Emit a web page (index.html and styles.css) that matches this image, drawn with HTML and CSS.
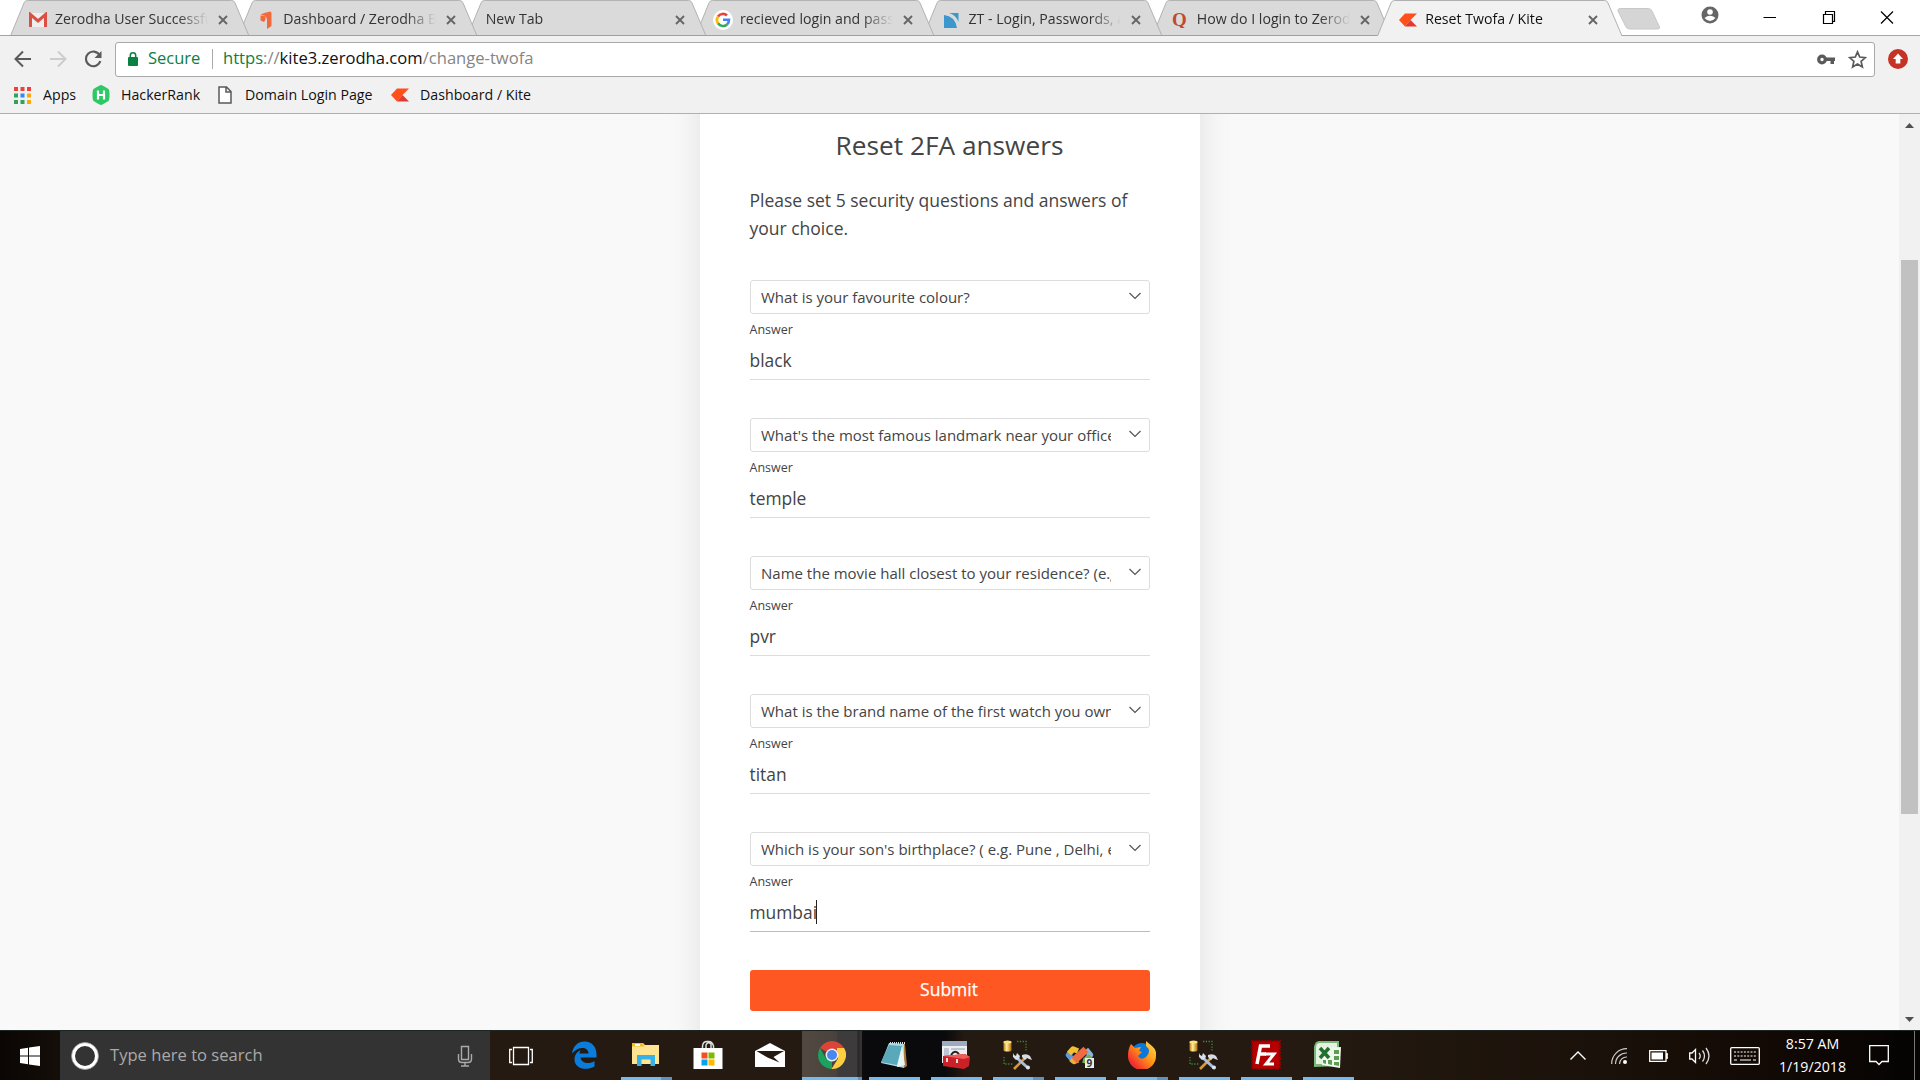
FILE: index.html
```
<!DOCTYPE html>
<html lang="en">
<head>
<meta charset="utf-8">
<title>Reset Twofa / Kite</title>
<link rel="stylesheet" href="styles.css">
</head>
<body>
<svg class="defs" width="0" height="0" aria-hidden="true">
  <defs>
    <symbol id="tab-shape" viewBox="0 0 246 36"><path d="M.5 36 14 3Q15 .5 17.500 .5H227.500Q230 .5 231 3L245 36"/></symbol>
    <symbol id="cross" viewBox="0 0 10 10"><path d="M1 1 9 9M9 1 1 9" stroke="#666" stroke-width="1.900" fill="none"/></symbol>
    <symbol id="kite" viewBox="0 0 18 14"><path d="M6 .5H18L11.500 7 6 13.500 0 7Z" fill="#ff4f1a"/><path d="M11.500 7 18 13.500H6Z" fill="#e03a33"/></symbol>
    <symbol id="chevron" viewBox="0 0 12 8"><path d="M.5 1 6 6.500 11.500 1" stroke="#555" stroke-width="1.200" fill="none"/></symbol>
    <linearGradient id="gold" x1="0" x2="1" y1="0" y2="0"><stop offset="0" stop-color="#b57a10"/><stop offset=".4" stop-color="#fff0a0"/><stop offset="1" stop-color="#b06c00"/></linearGradient>
    <symbol id="dbtools" viewBox="0 0 32 32">
      <path d="M1.500 3v8a4 1.500 0 0 0 8 0V3Z" fill="url(#gold)"/><ellipse cx="5.500" cy="3" rx="4" ry="1.500" fill="#ffdf78"/>
      <path d="M15 2.500H24V12M2 18v7h9" fill="none" stroke="#3c8c35" stroke-width="1.300" stroke-dasharray="1.300 1.500"/>
      <path d="M12 30 24 18" stroke="#d99a35" stroke-width="2.600"/><path d="M20 16q5-2 8 1l2 4-3-1-2-1-2 2-3-3Z" fill="#d5dbe5"/>
      <path d="M14 18 26 29" stroke="#aabddc" stroke-width="3"/><path d="M11 14v4l3 3 3-1 1-3-3-3-1 3-2-1Z" fill="#d5dff0"/><circle cx="26" cy="28.500" r="2" fill="#dce5f3"/>
    </symbol>
  </defs>
</svg>

<header class="browser">
  <div class="tabstrip">
    <div class="tabs">
      <div class="tab"><svg class="tab-bg"><use href="#tab-shape"/></svg>
        <svg class="fav" viewBox="0 0 18 14"><path d="M0 0H18V14H0Z" fill="#eee"/><path d="M1.500 14V1.500L9 8l7.500-6.500V14" fill="none" stroke="#dc4f43" stroke-width="3"/></svg>
        <span class="tab-title">Zerodha User Successful</span><svg class="tab-close"><use href="#cross"/></svg></div>
      <div class="tab"><svg class="tab-bg"><use href="#tab-shape"/></svg>
        <svg class="fav fav-console" viewBox="0 0 18 18"><path d="M3.500 3.500 9 1.500 13.500 .5 14.500 2V15L10 18V8L8.500 5Z" fill="#f26a3b"/><path d="M3.500 4.500 8.500 5V8.500L7 11 3.500 9.500Z" fill="#f26a3b"/></svg>
        <span class="tab-title">Dashboard / Zerodha Ba</span><svg class="tab-close"><use href="#cross"/></svg></div>
      <div class="tab"><svg class="tab-bg"><use href="#tab-shape"/></svg>
        <span class="tab-title">New Tab</span><svg class="tab-close"><use href="#cross"/></svg></div>
      <div class="tab"><svg class="tab-bg"><use href="#tab-shape"/></svg>
        <svg class="fav fav-google" viewBox="0 0 20 20"><circle cx="10" cy="10" r="10" fill="#fff"/><g fill="none" stroke-width="2.600"><path d="M5 6.500A6 6 0 0 1 14 5.500" stroke="#ea4335"/><path d="M5 13.300A6 6 0 0 1 5 6.500" stroke="#fbbc05"/><path d="M14 14.500A6 6 0 0 1 5 13.300" stroke="#34a853"/><path d="M10 9.800H16A6 6 0 0 1 14 14.500" stroke="#4285f4"/></g></svg>
        <span class="tab-title">recieved login and passw</span><svg class="tab-close"><use href="#cross"/></svg></div>
      <div class="tab"><svg class="tab-bg"><use href="#tab-shape"/></svg>
        <svg class="fav" viewBox="0 0 18 16"><path d="M2 3Q13 4 15 16H2Z" fill="#3b97cc"/><path d="M7 1H16.500V10Q14 3 7 1Z" fill="#3b97cc"/></svg>
        <span class="tab-title">ZT - Login, Passwords, a</span><svg class="tab-close"><use href="#cross"/></svg></div>
      <div class="tab"><svg class="tab-bg"><use href="#tab-shape"/></svg>
        <svg class="fav" viewBox="0 0 18 16"><text x="1" y="13.500" class="quora">Q</text></svg>
        <span class="tab-title">How do I login to Zerodha</span><svg class="tab-close"><use href="#cross"/></svg></div>
      <div class="tab active"><svg class="tab-bg"><use href="#tab-shape"/></svg>
        <svg class="fav"><use href="#kite"/></svg>
        <span class="tab-title">Reset Twofa / Kite</span><svg class="tab-close"><use href="#cross"/></svg></div>
    </div>
    <svg class="newtab" viewBox="0 0 44 22"><path d="M3 .5H31Q34 .5 35 3L42.500 19Q43 21 41 21H13Q10 21 9 19L1 3Q.5 .5 3 .5Z" fill="#d5d5d5" stroke="#c8c8c8"/></svg>
    <div class="window-buttons">
      <svg class="win-avatar" viewBox="0 0 18 18"><circle cx="9" cy="9" r="8.500" fill="#666"/><circle cx="9" cy="6" r="2.800" fill="#fff"/><path d="M3.500 12Q9 7.500 14.500 12 9 18 3.500 12Z" fill="#fff"/></svg>
      <svg class="win-btn" viewBox="0 0 14 14"><path d="M.5 7.500H13" stroke="#000" fill="none"/></svg>
      <svg class="win-btn" viewBox="0 0 14 14"><path d="M1.500 4.500H10.500V13.500H1.500ZM3.500 4V1.500H12.500V11.500H11" stroke="#000" fill="none" stroke-width="1.200"/></svg>
      <svg class="win-btn" viewBox="0 0 14 14"><path d="M1 1.500 13 13.500M13 1.500 1 13.500" stroke="#000" fill="none" stroke-width="1.200"/></svg>
    </div>
  </div>

  <div class="toolbar">
    <svg class="nav" viewBox="0 0 18 18"><path d="M17 9H2M9 1.500 1.500 9 9 16.500" fill="none" stroke="#5a5a5a" stroke-width="2"/></svg>
    <svg class="nav" viewBox="0 0 18 18"><path d="M1 9H16M9 1.500 16.500 9 9 16.500" fill="none" stroke="#ccc" stroke-width="2"/></svg>
    <svg class="nav" viewBox="0 0 18 18"><path d="M15.500 5A7.300 7.300 0 1 0 16.300 11" fill="none" stroke="#5a5a5a" stroke-width="2.100"/><path d="M17.500 1V8H10.500Z" fill="#5a5a5a"/></svg>
    <div class="omnibox">
      <svg class="lock" viewBox="0 0 10 14"><rect y="5" width="10" height="9" rx="1" fill="#0b8043"/><path d="M2.300 6V3.500a2.700 2.700 0 0 1 5.400 0V6" fill="none" stroke="#0b8043" stroke-width="1.500"/></svg>
      <span class="secure">Secure</span>
      <span class="divider"></span>
      <span class="url"><span class="scheme">https</span>://<span class="host">kite3.zerodha.com</span>/change-twofa</span>
      <svg class="key" viewBox="0 0 18 10"><circle cx="5" cy="5" r="3.300" fill="none" stroke="#5a5a5a" stroke-width="3.200"/><path d="M9 3H18V6.500H17V9.500H13.500V6.500H9Z" fill="#5a5a5a"/></svg>
      <svg class="star" viewBox="0 0 18 18"><path d="M9 1.800 11.100 6.700 16.500 7.200 12.400 10.700 13.600 16 9 13.200 4.400 16 5.600 10.700 1.500 7.200 6.900 6.700Z" fill="none" stroke="#5a5a5a" stroke-width="1.600"/></svg>
    </div>
    <svg class="ext" viewBox="0 0 20 20"><circle cx="10" cy="10" r="10" fill="#c63326"/><path d="M10 4.500 15 10H12.300V14.500H7.700V10H5Z" fill="#fff"/></svg>
  </div>

  <nav class="bookmarks">
    <svg class="bm-icon" viewBox="0 0 17 17"><g fill="#ee4138"><path d="M0 0h4v4H0zM6.500 0h4v4h-4zM13 0h4v4h-4z"/></g><path d="M0 6.500h4v4H0zM0 13h4v4H0zM6.500 13h4v4h-4z" fill="#2fa35a"/><path d="M6.500 6.500h4v4h-4z" fill="#2f8af5"/><path d="M13 6.500h4v4h-4zM13 13h4v4h-4z" fill="#fba90a"/></svg>
    <span class="bm-text bm-apps">Apps</span>
    <svg class="bm-hr" viewBox="0 0 18 20"><path d="M9 0Q10 0 16.500 4 17.500 5 17.500 10T16.500 16Q10 20 9 20T1.500 16Q.5 15 .5 10T1.500 4Q8 0 9 0Z" fill="#2ec866"/><path d="M6 5.500V14.500M12 5.500V14.500M6 10H12" stroke="#fff" stroke-width="2.200" fill="none"/></svg>
    <span class="bm-text bm-hacker">HackerRank</span>
    <svg class="bm-page" viewBox="0 0 14 18"><path d="M1 1H8.500L13 5.500V17H1ZM8 1V6H13" fill="#fff" stroke="#5a5a5a" stroke-width="1.500"/></svg>
    <span class="bm-text bm-domain">Domain Login Page</span>
    <svg class="bm-kite"><use href="#kite"/></svg>
    <span class="bm-text">Dashboard / Kite</span>
  </nav>
</header>

<main class="page">
  <div class="canvas">
    <form class="card">
      <h1 class="title">Reset 2FA answers</h1>
      <p class="intro">Please set 5 security questions and answers of your choice.</p>
      <div class="question"><div class="select"><span class="select-text">What is your favourite colour?</span><svg class="select-arrow"><use href="#chevron"/></svg></div>
        <span class="label">Answer</span><div class="answer">black</div></div>
      <div class="question"><div class="select"><span class="select-text">What's the most famous landmark near your office</span><svg class="select-arrow"><use href="#chevron"/></svg></div>
        <span class="label">Answer</span><div class="answer">temple</div></div>
      <div class="question"><div class="select"><span class="select-text">Name the movie hall closest to your residence? (e.g</span><svg class="select-arrow"><use href="#chevron"/></svg></div>
        <span class="label">Answer</span><div class="answer">pvr</div></div>
      <div class="question"><div class="select"><span class="select-text">What is the brand name of the first watch you owned</span><svg class="select-arrow"><use href="#chevron"/></svg></div>
        <span class="label">Answer</span><div class="answer">titan</div></div>
      <div class="question"><div class="select"><span class="select-text">Which is your son's birthplace? ( e.g. Pune , Delhi, etc</span><svg class="select-arrow"><use href="#chevron"/></svg></div>
        <span class="label">Answer</span><div class="answer focused">mumbai<span class="caret"></span></div></div>
      <button class="submit" type="button">Submit</button>
    </form>
  </div>
  <div class="scrollbar">
    <svg class="arrow" viewBox="0 0 9 5"><path d="M0 5 4.500 0 9 5Z" fill="#505050"/></svg>
    <div class="track"><div class="thumb"></div></div>
    <svg class="arrow" viewBox="0 0 9 5"><path d="M0 0 4.500 5 9 0Z" fill="#505050"/></svg>
  </div>
</main>

<footer class="taskbar">
  <div class="start"><svg width="20" height="20" viewBox="0 0 20 20"><path d="M0 3 8 1.800V9.500H0ZM9 1.600 20 0V9.500H9ZM0 10.500H8V18.200L0 17ZM9 10.500H20V20L9 18.400Z" fill="#fff"/></svg></div>
  <div class="search">
    <svg width="28" height="28" viewBox="0 0 28 28"><circle cx="14" cy="14" r="11.700" fill="none" stroke="#fff" stroke-width="3.400"/><circle cx="14" cy="14" r="13.500" fill="none" stroke="#999" stroke-width=".8"/></svg>
    <span class="search-text">Type here to search</span>
    <svg width="16" height="22" viewBox="0 0 16 22"><path d="M4.500 1.500H11.500V14.500H4.500ZM1.500 9V14Q1.500 17.500 5 17.500H11Q14.500 17.500 14.500 14V9M8 17.500V21M4 21H12" fill="none" stroke="#aaa" stroke-width="1.400"/></svg>
  </div>
  <div class="apps">
    <div class="app first"><svg width="24" height="20" viewBox="0 0 24 20"><path d="M4.500 1.500H19.500V18.500H4.500ZM3 3.500H.7V16.500H3M21 3.500H23.300V16.500H21" fill="none" stroke="#fff" stroke-width="1.300"/></svg></div>
    <div class="app"><svg width="26" height="28" viewBox="0 0 26 28"><path d="M1 12.500C2 5 7 .5 13.500.5 21 .5 25.500 6 25.500 13V16.500H9.500C10 22 18 24 23.500 20V25.500C14 30.500 3.500 27 3.500 18.500 3.500 14 6 10.500 10 9 8.500 10.500 8.500 12 8.500 12.500H17.500C17.500 5 6.500 5 1 12.500Z" fill="#0a7cdb"/></svg></div>
    <div class="app open stacked"><svg width="28" height="26" viewBox="0 0 28 26"><path d="M0 1H11L13 3H27V22H0Z" fill="#ffe592"/><path d="M0 1H11L12.500 4.500H0Z" fill="#f7bc23"/><path d="M3 2H8V4H3Z" fill="#fff"/><path d="M5 24V13H23V24H18.500V17.500H9.500V24Z" fill="#37b2e8"/></svg></div>
    <div class="app"><svg width="30" height="30" viewBox="0 0 30 30"><path d="M9.500 9V6Q10 1 15 1.500 19 1 20.500 6V9M13 9V5Q15 1 18 4V9" fill="none" stroke="#ddd" stroke-width="1.500"/><path d="M.5 8H29.500V29H.5Z" fill="#fff"/><path d="M8.500 12.500H14.500V18.500H8.500Z" fill="#f25022"/><path d="M15.500 12.500H21.500V18.500H15.500Z" fill="#7fba00"/><path d="M8.500 19.500H14.500V25.500H8.500Z" fill="#00a4ef"/><path d="M15.500 19.500H21.500V25.500H15.500Z" fill="#ffb900"/></svg></div>
    <div class="app"><svg width="30" height="26" viewBox="0 0 30 26"><path d="M0 9 15 1 30 9V25H0Z" fill="#fff"/><path d="M1.500 9H29L18.500 15 24.500 20.500 12.500 15.500Z" fill="#241a11"/></svg></div>
    <div class="app open current"><svg width="28" height="28" viewBox="0 0 28 28"><path d="M14 14 1.900 7A14 14 0 0 1 26.100 7Z" fill="#db4437"/><path d="M14 14 14 28A14 14 0 0 1 1.900 7L8 17.500Z" fill="#1da15f"/><path d="M26.100 7A14 14 0 0 1 13.500 28L20 17.500 19 9V7Z" fill="#ffcd40"/><circle cx="14" cy="14" r="6.500" fill="#eee"/><circle cx="14" cy="14" r="5" fill="#4a86ee"/></svg></div>
    <div class="app open"><svg width="28" height="28" viewBox="0 0 28 28"><path d="M9 2 25 3 27 25 24 27Z" fill="#a97c3b"/><path d="M9 2 24 3 24 27 1 22Z" fill="#a9dbe4"/><path d="M9 4 22 5 17 24 1 21Z" fill="#59a9bb"/><path d="M22 5 25 24 17 26Z" fill="#e9f5f5"/><path d="M10 2H25" stroke="#ddd" stroke-width="2" stroke-dasharray="1 1"/></svg></div>
    <div class="app open"><svg width="30" height="30" viewBox="0 0 30 30"><path d="M1 1H26V23H1Z" fill="#eee"/><path d="M1 1H26V6H1Z" fill="#9daac0"/><path d="M3 8H8V20H3ZM10 8H24V10H10Z" fill="#bcc6d5"/><path d="M10 15Q14 9 18 14" fill="none" stroke="#222" stroke-width="2"/><path d="M2 16 24 14 29 17 28 26 23 29 2 26Z" fill="#cc2027"/><path d="M2 16 24 14 29 17 23 19Z" fill="#ee5b58"/><path d="M6 18V22M16 19V23" stroke="#ddd" stroke-width="2"/></svg></div>
    <div class="app open stacked"><svg width="32" height="32"><use href="#dbtools"/></svg></div>
    <div class="app open"><svg width="30" height="28" viewBox="0 0 30 28"><g fill="none" stroke-width="5.500" stroke-linejoin="round"><path d="M9 20.500 3.500 14 8 8.500" stroke="#5b9ce0"/><path d="M20 20 25.500 14 21 8.500" stroke="#84b6e3"/><path d="M4 12.500 8 8 13 10" stroke="#f2be33"/><path d="M18 19 21 20 25.500 15" stroke="#72b04d"/><path d="M13 19 9 20.500 6 18" stroke="#e8b33a"/><path d="M9 19.500 21 8.500" stroke="#ee6c41" stroke-width="7.500"/></g><path d="M20 17H29V27H20Z" fill="#eee"/><text x="21.500" y="25.500" class="badge-number">9</text></svg></div>
    <div class="app open stacked"><svg width="28" height="28" viewBox="0 0 28 28"><defs><linearGradient id="fox" x1="1" y1="0" x2="0" y2="1"><stop offset="0" stop-color="#ffe54a"/><stop offset=".45" stop-color="#ff9418"/><stop offset=".8" stop-color="#f5302f"/><stop offset="1" stop-color="#d71b69"/></linearGradient></defs><circle cx="14" cy="13" r="11" fill="#0878da"/><path d="M3 3 7 7 13 6 11 10 14 11 10 15Q13 20 18 16 24 10 18 5V0L24 5Q29 9 28 15A14 14 0 0 1 0 15Q0 8 3 3Z" fill="url(#fox)"/></svg></div>
    <div class="app open"><svg width="32" height="32"><use href="#dbtools"/></svg></div>
    <div class="app open"><svg width="30" height="30" viewBox="0 0 30 30"><path d="M1 1H29V29H1Z" fill="#b40000" stroke="#8c0000" stroke-width="2" stroke-dasharray="2 1"/><path d="M6 24 9.500 6H19M8 14H15" fill="none" stroke="#fff" stroke-width="3.500"/><path d="M14 14H23L15 24H23" fill="none" stroke="#fff" stroke-width="3"/></svg></div>
    <div class="app open"><svg width="30" height="30" viewBox="0 0 30 30"><path d="M6 1H26V26L1 27V7Q2 1 6 1Z" fill="#7cb879"/><path d="M7 3H24V24H3V8Q3 3 7 3Z" fill="#e5f2e1"/><path d="M11 8 28 7 27 28 9 25Z" fill="#f0f7ee"/><path d="M21 10H26V14H21ZM21 16H26V20H21ZM21 22H26V26L21 25ZM15 20H19V25L15 24ZM10 20H13V24L10 23Z" fill="#5c9e51"/><path d="M7 8 16 18M16 8 7 18" stroke="#21702e" stroke-width="3.500"/></svg></div>
  </div>
  <div class="tray">
    <svg width="16" height="9" viewBox="0 0 16 9"><path d="M.5 8.500 8 1 15.500 8.500" fill="none" stroke="#fff" stroke-width="1.400"/></svg>
    <svg class="wifi" width="16" height="16" viewBox="0 0 16 16"><g fill="none" stroke="#ccc" stroke-width="1.200"><path d="M.7 16A15 15 0 0 1 16 .7M4.500 16A11 11 0 0 1 16 5M8.500 16A7 7 0 0 1 16 9"/></g><circle cx="14" cy="14" r="2" fill="#fff"/></svg>
    <svg class="battery" width="19" height="12" viewBox="0 0 19 12"><path d="M.7.7H17V11.300H.7ZM17.500 4V8H19V4Z" fill="none" stroke="#fff" stroke-width="1.300"/><path d="M2.500 2.500H14V9.500H2.500Z" fill="#fff"/></svg>
    <svg width="21" height="18" viewBox="0 0 21 18"><path d="M.7 6H3L6.500 2.500V15.500L3 12H.7Z" fill="none" stroke="#fff" stroke-width="1.300"/><path d="M10 6Q12.500 9 10 12M13.500 3.500Q17.500 9 13.500 14.500M17 1Q23 9 17 17" fill="none" stroke="#ddd" stroke-width="1.300"/></svg>
    <svg width="30" height="18" viewBox="0 0 30 18"><rect x=".7" y=".7" width="28.600" height="16.600" rx="1" fill="none" stroke="#fff" stroke-width="1.300"/><path d="M4 5H27M4 9H27" stroke="#fff" stroke-width="1.200" stroke-dasharray="2 1.300"/><path d="M4 13H7M10 13H21M23 13H26" stroke="#fff" stroke-width="1.200"/></svg>
    <div class="clock"><span>8:57 AM</span><span>1/19/2018</span></div>
    <svg class="notify" width="20" height="21" viewBox="0 0 20 21"><path d="M.7.7H19.300V16.500H13L10 19.500 7 16.500H.7Z" fill="none" stroke="#fff" stroke-width="1.300"/></svg>
  </div>
  <div class="show-desktop"></div>
</footer>
</body>
</html>
```
FILE: styles.css
```
* { box-sizing: border-box; }
body {
  margin: 0;
  width: 1920px;
  height: 1080px;
  overflow: hidden;
  display: flex;
  flex-direction: column;
  font-family: "Open Sans", sans-serif;
  color: #444;
}
svg { display: block; flex: none; }
.defs { position: absolute; }

/* browser frame */
.browser { height: 114px; background: #f1f1f1; border-bottom: 1px solid #b0b0b0; flex: none; }
.tabstrip {
  height: 36px;
  display: flex;
  background: #fff;
  border-bottom: 1px solid #a5a5a5;
}
.tabs { display: flex; padding-left: 7px; isolation: isolate; }
.tab {
  position: relative;
  display: flex;
  align-items: center;
  width: 245px;
  height: 36px;
  margin-right: -16.650px;
  padding: 1px 24px 0 22px;
  flex: none;
}
.tab:nth-child(1) { z-index: 6; }
.tab:nth-child(2) { z-index: 5; }
.tab:nth-child(3) { z-index: 4; }
.tab:nth-child(4) { z-index: 3; }
.tab:nth-child(5) { z-index: 2; }
.tab:nth-child(6) { z-index: 1; }
.tab.active { z-index: 7; }
.tab-bg {
  position: absolute;
  inset: 0;
  width: 246px;
  height: 36px;
  z-index: -1;
  fill: #dadada;
  stroke: #b0b0b0;
  border-bottom: 1px solid #a0a0a0;
}
.active .tab-bg { fill: #f1f1f1; border-bottom: 0; }
.fav { width: 18px; height: 16px; margin: 2px 8px 0 0; }
.fav-google { width: 20px; height: 20px; margin: 2px 7px 0 -1px; }
.fav-console { height: 18px; }
.quora { font: bold 19px "Liberation Serif", serif; fill: #c1492f; }
.tab-title {
  flex: 1;
  min-width: 0;
  overflow: hidden;
  white-space: nowrap;
  font-size: 14.150px;
  line-height: 24px;
  color: #333;
  margin-right: 10px;
  -webkit-mask-image: linear-gradient(to right, #000 calc(100% - 30px), transparent);
  mask-image: linear-gradient(to right, #000 calc(100% - 30px), transparent);
}
.active .tab-title { color: #111; }
.tab-close { width: 10px; height: 10px; margin-top: 2px; }
.newtab { width: 44px; height: 22px; margin: 8px 0 0 11px; }
.window-buttons { display: flex; margin-left: 40px; gap: 44.500px; padding-top: 10px; }
.win-avatar { width: 18px; height: 18px; margin: -4px 0 0; }
.win-btn { width: 14px; height: 14px; }

.toolbar { display: flex; align-items: center; height: 45px; padding: 0 12px 0 14px; }
.nav { width: 18px; height: 18px; margin-right: 17px; }
.omnibox {
  display: flex;
  align-items: center;
  width: 1760px;
  height: 35px;
  margin: 1px 13px 0 -4px;
  padding: 0 7px 0 12px;
  background: #fff;
  border: 1px solid #a9a9a9;
  border-radius: 3px;
  font-size: 16.500px;
  line-height: 22px;
  white-space: nowrap;
}
.lock { width: 10px; height: 14px; }
.secure { margin-left: 10px; padding-bottom: 2px; color: #0b8043; width: 64px; }
.divider { width: 1px; height: 20px; background: #aaa; margin-right: 10px; }
.url { flex: 1; padding-bottom: 2px; color: #858585; font-size: 16.600px; }
.scheme { color: #0b8043; }
.host { color: #111; }
.key { width: 18px; height: 11px; margin-right: 13px; }
.star { width: 19px; height: 19px; }
.ext { width: 20px; height: 20px; }

.bookmarks { display: flex; align-items: center; height: 28px; padding-left: 14px; font-size: 14.200px; color: #111; }
.bm-text { white-space: nowrap; padding-bottom: 2px; }
.bm-icon { width: 17px; height: 17px; margin-right: 12px; }
.bm-apps { width: 49px; }
.bm-hr { width: 18px; height: 20px; margin-right: 11px; }
.bm-hacker { width: 97px; }
.bm-page { width: 14px; height: 18px; margin-right: 13px; }
.bm-domain { width: 146px; }
.bm-kite { width: 18px; height: 14px; margin-right: 11px; }

/* page */
.page { height: 916px; display: flex; background: #f9f9f9; flex: none; }
.canvas { flex: 1; display: flex; overflow: hidden; padding-left: 700px; }
.card {
  width: 500px;
  height: 1000px;
  flex: none;
  margin-top: -40px;
  padding: 53px 50px 0;
  background: #fff;
  box-shadow: 0 0 32px rgba(0, 0, 0, .1);
}
.title { margin: 0 1px 23px 0; font-size: 26.250px; line-height: 36px; font-weight: 400; text-align: center; }
.intro { margin: 0 0 38px -.5px; font-size: 17.500px; line-height: 28px; }
.question { display: flex; flex-direction: column; height: 100px; margin-bottom: 38px; }
.select {
  display: flex;
  align-items: center;
  justify-content: space-between;
  height: 34px;
  padding: 0 8px 0 10px;
  border: 1px solid #ddd;
  border-radius: 3px;
  font-size: 15px;
}
.select-text { width: 350px; overflow: hidden; white-space: nowrap; }
.select-arrow { width: 12px; height: 8px; margin-bottom: 3px; }
.label { margin: 6px 0 0 -.5px; font-size: 12.500px; line-height: 20px; }
.answer {
  display: flex;
  align-items: center;
  height: 40px;
  padding-top: 1px;
  border-bottom: 1px solid #ddd;
  font-size: 17.400px;
  text-indent: -.5px;
}
.answer.focused { border-color: #bbb; }
.caret { width: 1px; height: 24px; margin-left: -1px; background: #222; }
.submit {
  display: block;
  width: 400px;
  height: 41px;
  border: 0;
  border-radius: 3px;
  background: #ff5722;
  color: #fff;
  font: 400 17.500px "Open Sans", sans-serif;
  -webkit-text-stroke: .25px #fff;
  padding: 0 2px 3px 0;
}
.scrollbar {
  width: 21px;
  display: flex;
  flex-direction: column;
  align-items: center;
  justify-content: space-between;
  padding: 9px 0 8px;
  background: #f1f1f1;
}
.arrow { width: 9px; height: 5px; }
.track { flex: 1; padding-top: 132px; }
.thumb { width: 17px; height: 554px; background: #c1c1c1; }

/* taskbar */
.taskbar {
  height: 50px;
  flex: none;
  display: flex;
  color: #fff;
  border-top: 1px solid #1d2424;
  background: linear-gradient(to right, #0a0604 0, #150e09 60px, #241a11 490px, #241a11 840px, #0a090b 866px, #0a090b 945px, #241a11 965px, #241a11 1300px, #1a110a 1600px, #140a05 1750px, #060403 1900px);
}
.start { width: 60px; display: flex; align-items: center; justify-content: center; }
.search { width: 430px; display: flex; align-items: center; padding: 0 17px 0 11px; background: #333; }
.search-text { flex: 1; margin-left: 11px; padding-bottom: 2px; font-size: 16.600px; color: #aaa; }
.apps { display: flex; }
.app { position: relative; width: 62px; padding: 0 0 2px 2px; display: flex; align-items: center; justify-content: center; }
.app.first { padding: 0; }
.badge-number { font: bold 10px "Open Sans", sans-serif; fill: #333; }
.open::after {
  content: "";
  position: absolute;
  left: 7px;
  bottom: 0;
  width: 51px;
  height: 3px;
  background: #76b9ed;
}
.stacked::after { background: linear-gradient(to right, #76b9ed 40px, #5f93be 40px); }
.current { background: linear-gradient(to right, transparent 2px, #514941 2px, #4a433d 36px, #3d3b3b 38px, #3d3b3b 57px, #242326 58px, #333 60px); }
.current::after { left: 2px; width: 60px; background: linear-gradient(to right, #76b9ed 56px, #5f93be 56px); }
.tray { flex: 1; display: flex; align-items: center; justify-content: flex-end; gap: 20.500px; padding-right: 25px; }
.wifi { margin-left: 4px; }
.battery { margin-left: 2px; }
.clock {
  display: flex;
  flex-direction: column;
  align-items: center;
  width: 90px;
  margin: 0 0 2px -13px;
  font-size: 14.150px;
  line-height: 23px;
}
.notify { margin-left: -9px; }
.show-desktop { width: 6px; border-left: 1px solid #777; }
```
